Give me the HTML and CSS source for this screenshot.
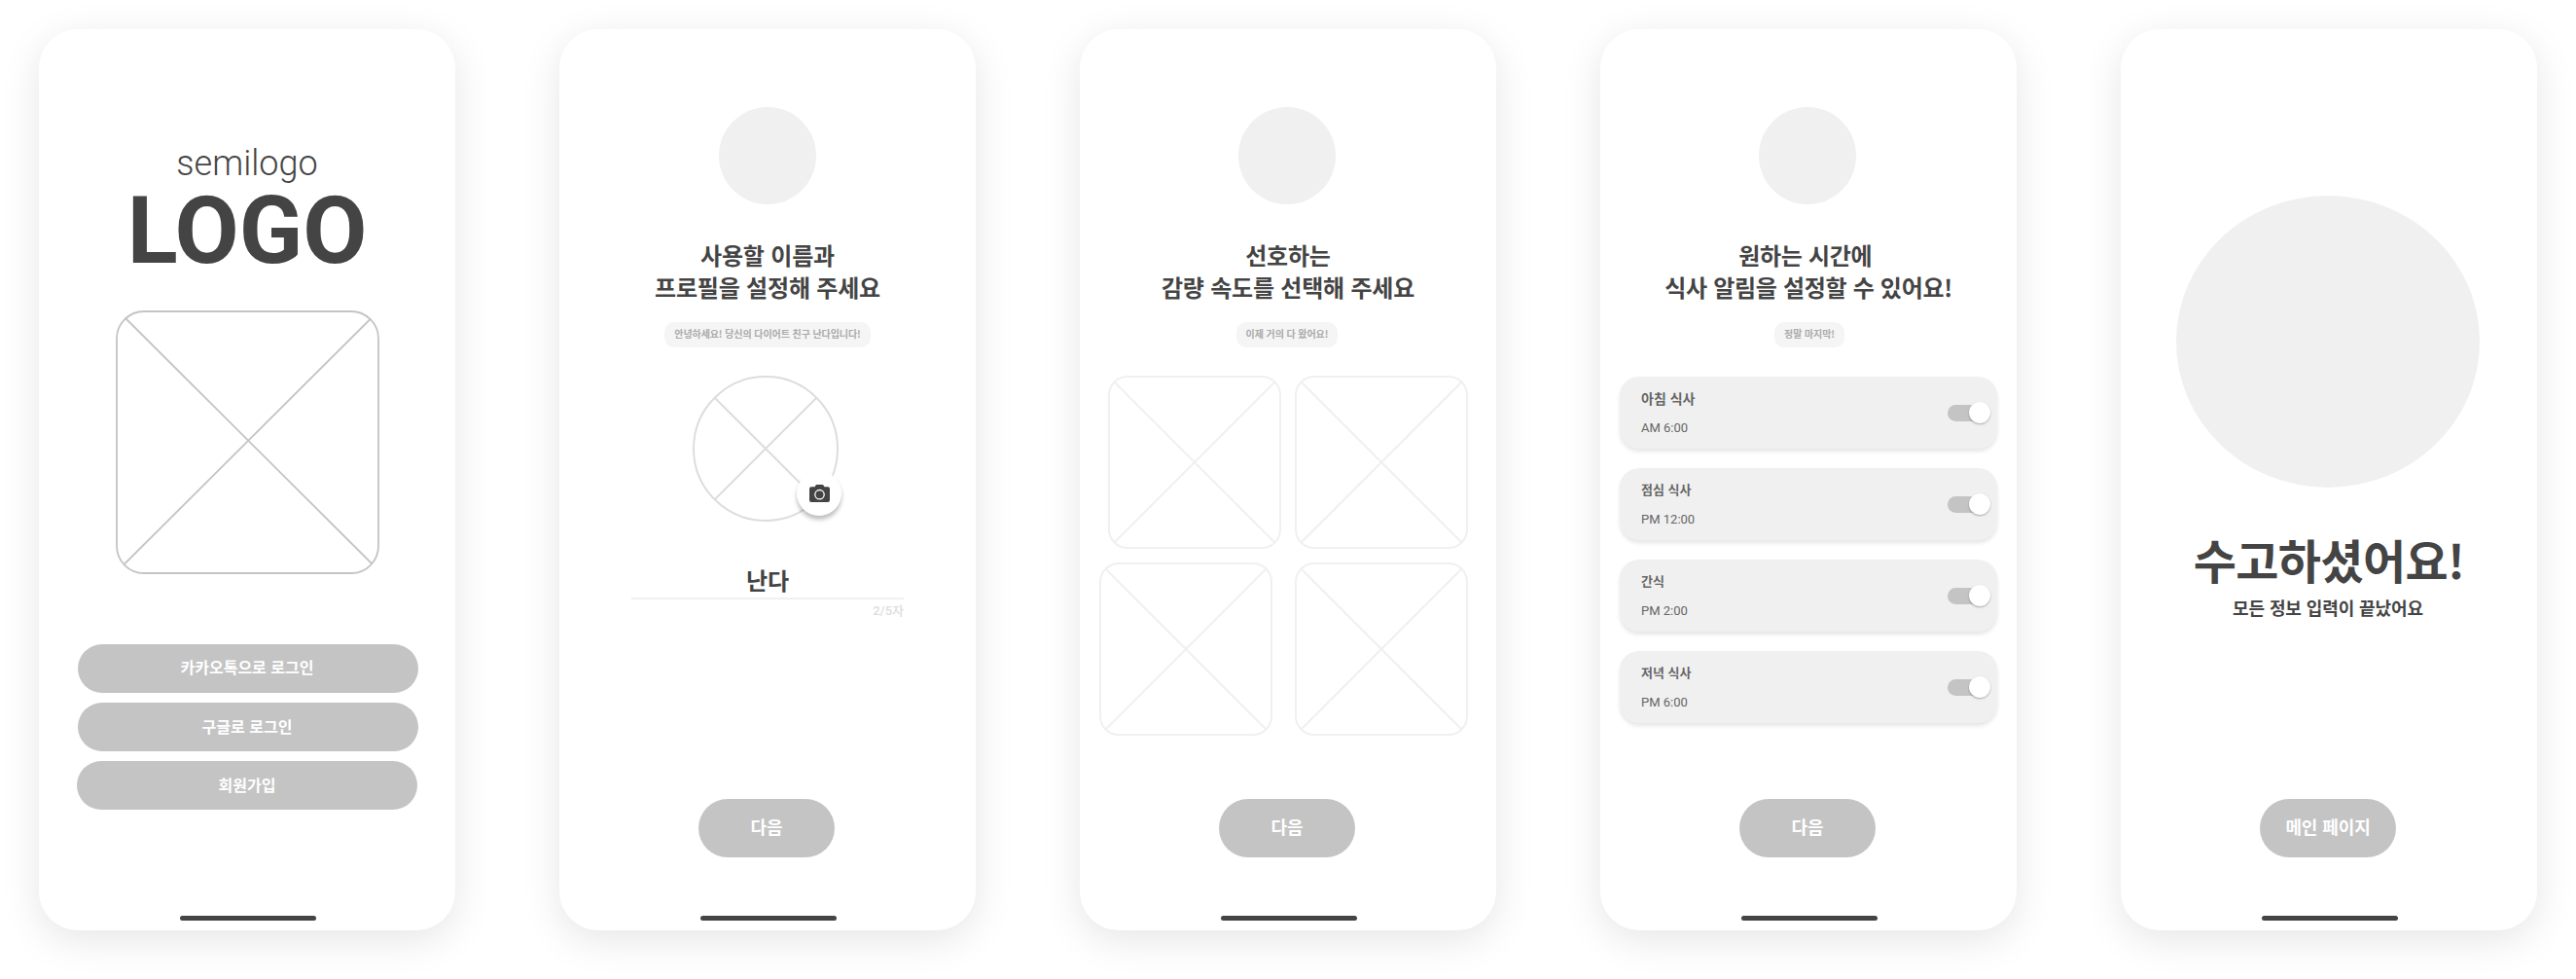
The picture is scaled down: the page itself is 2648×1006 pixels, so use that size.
FILE: index.html
```html
<!DOCTYPE html>
<html lang="ko">
<head>
<meta charset="utf-8">
<title>온보딩 와이어프레임</title>
<link rel="stylesheet" href="styles.css">
</head>
<body>
<main class="board">

  <section class="phone">
    <div class="semilogo">semilogo</div>
    <h1 class="logo">LOGO</h1>
    <svg class="hero" width="271" height="271" viewBox="0 0 271 271" fill="none" stroke="#c4c4c4" stroke-width="1.8">
      <rect x="1" y="1" width="269" height="269" rx="28"/>
      <path d="M9.5 7.5 263 260M262 8.5 9 260.5"/>
    </svg>
    <div class="logins">
      <button class="login login-kakao">카카오톡으로 로그인</button>
      <button class="login">구글로 로그인</button>
      <button class="login login-join">회원가입</button>
    </div>
    <div class="home-bar"></div>
  </section>

  <section class="phone">
    <div class="avatar"></div>
    <h2 class="title">사용할 이름과<br>프로필을 설정해 주세요</h2>
    <p class="chip">안녕하세요! 당신의 다이어트 친구 난다입니다!</p>
    <div class="profile">
      <svg width="150" height="150" viewBox="0 0 150 150" fill="none" stroke="#ddd" stroke-width="2">
        <circle cx="75" cy="75" r="74"/>
        <path d="M22.7 22.7 127.3 127.3M127.3 22.7 22.7 127.3"/>
      </svg>
      <span class="camera">
        <svg width="21" height="18" viewBox="0 0 21 18">
          <path fill="#444" d="M6.3 1a1.600 1.600 0 0 1 1.400-1h5.600a1.600 1.600 0 0 1 1.400 1l.7 1.200H19a2 2 0 0 1 2 2V16a2 2 0 0 1-2 2H2a2 2 0 0 1-2-2V4.200a2 2 0 0 1 2-2h3.600z"/>
          <circle cx="10.500" cy="10.200" r="4.700" fill="none" stroke="#fff" stroke-width="1.300"/>
        </svg>
      </span>
    </div>
    <div class="name-field">난다</div>
    <div class="count">2/5자</div>
    <button class="next">다음</button>
    <div class="home-bar"></div>
  </section>

  <section class="phone">
    <div class="avatar avatar-left"></div>
    <h2 class="title">선호하는<br>감량 속도를 선택해 주세요</h2>
    <p class="chip chip-almost">이제 거의 다 왔어요!</p>
    <svg class="symbols" width="0" height="0">
      <symbol id="placeholder" viewBox="0 0 178 178">
        <g fill="none" stroke="#f0f0f0" stroke-width="2">
          <rect x="1" y="1" width="176" height="176" rx="19"/>
          <path d="M7 7 171 171M171 7 7 171"/>
        </g>
      </symbol>
    </svg>
    <div class="choices">
      <div class="choice-row">
        <svg width="178" height="178"><use href="#placeholder"/></svg>
        <svg width="178" height="178"><use href="#placeholder"/></svg>
      </div>
      <div class="choice-row choice-row-wide">
        <svg width="178" height="178"><use href="#placeholder"/></svg>
        <svg width="178" height="178"><use href="#placeholder"/></svg>
      </div>
    </div>
    <button class="next">다음</button>
    <div class="home-bar"></div>
  </section>

  <section class="phone">
    <div class="avatar avatar-left"></div>
    <h2 class="title title-long">원하는 시간에&nbsp;<br>식사 알림을 설정할 수 있어요!</h2>
    <p class="chip chip-last">정말 마지막!</p>
    <div class="meals">
      <div class="meal">
        <div><div class="meal-name meal-name-first">아침 식사</div><div class="meal-time">AM 6:00</div></div>
        <span class="toggle"><span class="knob"></span></span>
      </div>
      <div class="meal">
        <div><div class="meal-name">점심 식사</div><div class="meal-time">PM 12:00</div></div>
        <span class="toggle"><span class="knob"></span></span>
      </div>
      <div class="meal">
        <div><div class="meal-name">간식</div><div class="meal-time">PM 2:00</div></div>
        <span class="toggle"><span class="knob"></span></span>
      </div>
      <div class="meal">
        <div><div class="meal-name">저녁 식사</div><div class="meal-time">PM 6:00</div></div>
        <span class="toggle"><span class="knob"></span></span>
      </div>
    </div>
    <button class="next">다음</button>
    <div class="home-bar"></div>
  </section>

  <section class="phone">
    <div class="big-circle"></div>
    <h2 class="done">수고하셨어요!</h2>
    <p class="done-sub">모든 정보 입력이 끝났어요</p>
    <button class="next">메인 페이지</button>
    <div class="home-bar"></div>
  </section>

</main>
</body>
</html>
```
FILE: styles.css
```css
* {
  box-sizing: border-box;
  margin: 0;
  padding: 0;
}

body {
  background: #fff;
  color: #444;
  font-family: Roboto, "Noto Sans CJK KR", sans-serif;
}

.board {
  display: flex;
  gap: 107px;
  width: 2648px;
  height: 1006px;
  padding: 30px 40px;
  overflow: hidden;
}

.phone {
  display: flex;
  flex: none;
  flex-direction: column;
  align-items: center;
  width: 428px;
  height: 926px;
  padding-bottom: 10px;
  border-radius: 40px;
  background: #fff;
  box-shadow: 0 10px 40px rgba(0, 0, 0, 0.1);
}

svg {
  display: block;
}

.home-bar {
  width: 140px;
  height: 5px;
  margin: 60px 0 0 2px;
  border-radius: 2.5px;
  background: #444;
}

/* Login */
.semilogo {
  height: 42px;
  margin-top: 117px;
  font-size: 36px;
  font-weight: 300;
  line-height: 42px;
}

.logo {
  height: 96px;
  font-size: 96px;
  font-weight: 700;
  line-height: 96px;
}

.hero {
  margin: 34px 0 0 1px;
}

.logins {
  display: flex;
  flex-direction: column;
  gap: 10px;
  width: 350px;
  margin: 72px 0 49px 2px;
}

.login,
.next {
  border: 0;
  background: #c4c4c4;
  color: #fff;
  font-family: "Noto Sans CJK KR", sans-serif;
  font-weight: 700;
}

.login {
  width: 350px;
  height: 50px;
  padding: 0 2px 2px 0;
  border-radius: 25px;
  font-size: 16px;
  line-height: 24px;
}

.login-kakao {
  padding-bottom: 4px;
}

.login-join {
  margin-left: -1px;
  padding-right: 0;
}

/* Step header */
.avatar {
  flex: none;
  width: 100px;
  height: 100px;
  margin-top: 80px;
  border-radius: 50%;
  background: #f0f0f0;
}

.avatar-left {
  margin-right: 2px;
}

.title {
  margin-top: 35px;
  font-family: "Noto Sans CJK KR", sans-serif;
  font-size: 24px;
  font-weight: 700;
  line-height: 33px;
  letter-spacing: -0.2px;
  text-align: center;
}

.title-long {
  letter-spacing: -0.3px;
}

.chip {
  height: 26px;
  margin-top: 20px;
  padding: 0 10px;
  border-radius: 10px;
  background: #f5f5f5;
  color: #aaa;
  font-family: "Noto Sans CJK KR", sans-serif;
  font-size: 10px;
  font-weight: 700;
  line-height: 24px;
  letter-spacing: -0.08px;
}

.chip-almost {
  margin-right: 2px;
}

.chip-last {
  margin-left: 2px;
}

/* Profile */
.profile {
  position: relative;
  width: 150px;
  height: 150px;
  margin: 29px 4px 0 0;
}

.camera {
  position: absolute;
  top: 98px;
  left: 107px;
  display: flex;
  align-items: center;
  justify-content: center;
  width: 46px;
  height: 46px;
  border-radius: 50%;
  background: #fff;
  box-shadow: 0 4px 4px rgba(0, 0, 0, 0.25);
}

.name-field {
  width: 280px;
  height: 37px;
  margin-top: 43px;
  border-bottom: 2px solid #f0f0f0;
  font-family: "Noto Sans CJK KR", sans-serif;
  font-size: 24px;
  font-weight: 700;
  line-height: 34px;
  text-align: center;
}

.count {
  width: 280px;
  height: 18px;
  margin-top: 3px;
  color: #ddd;
  font-size: 13px;
  font-weight: 500;
  line-height: 18px;
  text-align: right;
}

.next {
  width: 140px;
  height: 60px;
  margin: auto 2px 0 0;
  padding-bottom: 5px;
  border-radius: 30px;
  font-size: 18px;
  line-height: 26px;
  letter-spacing: -0.1px;
}

/* Pace choices */
.symbols {
  position: absolute;
}

.choices {
  display: flex;
  flex-direction: column;
  align-items: flex-end;
  gap: 14px;
  width: 379px;
  margin: 29px 9px 0 0;
}

.choice-row {
  display: flex;
  gap: 14px;
}

.choice-row-wide {
  gap: 23px;
}

/* Meal alarms */
.meals {
  display: flex;
  flex-direction: column;
  gap: 20px;
  margin-top: 30px;
}

.meal {
  display: flex;
  align-items: flex-start;
  justify-content: space-between;
  width: 388px;
  height: 74px;
  padding: 12px 8px 0 22px;
  border-radius: 20px;
  background: #f0f0f0;
  box-shadow: 0 3px 4px rgba(0, 0, 0, 0.1);
  color: #666;
}

.meal-name {
  height: 20px;
  font-family: "Noto Sans CJK KR", sans-serif;
  font-size: 13px;
  font-weight: 700;
  line-height: 20px;
}

.meal-name-first {
  font-size: 14px;
}

.meal-time {
  margin-top: 12px;
  font-size: 13px;
  line-height: 18px;
}

.toggle {
  display: flex;
  align-items: center;
  justify-content: flex-end;
  width: 43px;
  height: 17px;
  margin-top: 17px;
  border-radius: 9px;
  background: #c4c4c4;
}

.knob {
  flex: none;
  width: 22px;
  height: 22px;
  margin: 0 -0.7px 0.6px 0;
  border-radius: 50%;
  background: #fff;
  box-shadow: 0 1px 2px rgba(0, 0, 0, 0.3);
}

/* Finish */
.big-circle {
  flex: none;
  width: 312px;
  height: 300px;
  margin: 171px 2px 0 0;
  border-radius: 50%;
  background: #f0f0f0;
}

.done {
  height: 70px;
  margin-top: 38px;
  font-family: "Noto Sans CJK KR", sans-serif;
  font-size: 48px;
  font-weight: 700;
  line-height: 70px;
  letter-spacing: -0.6px;
}

.done-sub {
  margin: 2px 2px 0 0;
  font-family: "Noto Sans CJK KR", sans-serif;
  font-size: 18px;
  font-weight: 700;
  line-height: 26px;
  letter-spacing: -0.1px;
}
```
